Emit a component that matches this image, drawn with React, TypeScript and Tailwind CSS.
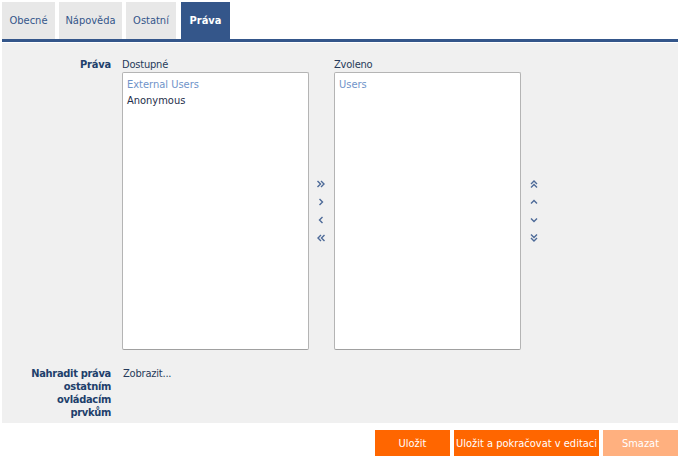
import React from "react";

const Chevron = ({ dir, double }: { dir: "r" | "l" | "u" | "d"; double?: boolean }) => {
  const rot = { r: 0, l: 180, u: -90, d: 90 }[dir];
  return (
    <svg width="10" height="10" viewBox="0 0 10 10" style={{ transform: `rotate(${rot}deg)` }}>
      {double ? (
        <>
          <path d="M1.5 2 L4.5 5 L1.5 8" fill="none" stroke="#4d6a98" strokeWidth="1.4" />
          <path d="M5 2 L8 5 L5 8" fill="none" stroke="#4d6a98" strokeWidth="1.4" />
        </>
      ) : (
        <path d="M3.5 2 L6.5 5 L3.5 8" fill="none" stroke="#4d6a98" strokeWidth="1.4" />
      )}
    </svg>
  );
};

export default function App() {
  const font = { fontFamily: "'DejaVu Sans Condensed', 'DejaVu Sans', sans-serif" };
  return (
    <div className="w-[680px] h-[458px] bg-white px-[2px] pt-[2px] text-[11px] leading-[13px]" style={font}>
      <div className="flex h-[37px] gap-[4px]">
        <div className="w-[53px] bg-[#e8e8e8] text-[#34568a] flex items-center justify-center">Obecné</div>
        <div className="w-[63px] bg-[#e8e8e8] text-[#34568a] flex items-center justify-center">Nápověda</div>
        <div className="w-[50px] bg-[#e8e8e8] text-[#34568a] flex items-center justify-center">Ostatní</div>
        <div className="w-[49px] ml-[1px] bg-[#34568a] text-white font-bold flex items-center justify-center">Práva</div>
      </div>
      <div className="h-[3px] bg-[#34568a]" />
      <div className="h-[1px] bg-white" />
      <div className="h-[380px] bg-[#f0f0f0] pt-[15px] text-[#263a5a]">
        <div className="flex">
          <div className="w-[109px] text-right font-bold text-[#213f6b] tracking-[-0.2px]">Práva</div>
          <div className="ml-[11px] flex">
            <div className="flex flex-col">
              <div className="h-[13px] mb-[1px] tracking-[-0.2px]">Dostupné</div>
              <div className="w-[187px] h-[278px] bg-white border border-[#b4b4b4] border-b-[#a0a0a0] rounded-[2px] px-[4px] pt-[4px]">
                <div className="text-[#6f93c9] leading-[16px]">External Users</div>
                <div className="text-[#1e2e4a] leading-[16px]">Anonymous</div>
              </div>
            </div>
            <div className="w-[25px] mt-[14px] flex flex-col items-center justify-center gap-[8px] pr-[1px]">
              <Chevron dir="r" double />
              <Chevron dir="r" />
              <Chevron dir="l" />
              <Chevron dir="l" double />
            </div>
            <div className="flex flex-col">
              <div className="h-[13px] mb-[1px] tracking-[-0.2px]">Zvoleno</div>
              <div className="w-[187px] h-[278px] bg-white border border-[#b4b4b4] border-b-[#a0a0a0] rounded-[2px] px-[4px] pt-[4px]">
                <div className="text-[#6f93c9] leading-[16px]">Users</div>
              </div>
            </div>
            <div className="w-[26px] mt-[14px] flex flex-col items-center justify-center gap-[8px]">
              <Chevron dir="u" double />
              <Chevron dir="u" />
              <Chevron dir="d" />
              <Chevron dir="d" double />
            </div>
          </div>
        </div>
        <div className="flex mt-[17px]">
          <div className="w-[109px] text-right font-bold text-[#213f6b] tracking-[-0.3px]">
            Nahradit práva<br />ostatním<br />ovládacím<br />prvkům
          </div>
          <div className="ml-[12px] tracking-[-0.2px]">Zobrazit...</div>
        </div>
      </div>
      <div className="flex justify-end gap-[4px] mt-[7px]">
        <button className="w-[75px] h-[26px] bg-[#ff6600] text-white">Uložit</button>
        <button className="w-[145px] h-[26px] bg-[#ff6600] text-white">Uložit a pokračovat v editaci</button>
        <button className="w-[75px] h-[26px] bg-[#ffb07f] text-white">Smazat</button>
      </div>
    </div>
  );
}
